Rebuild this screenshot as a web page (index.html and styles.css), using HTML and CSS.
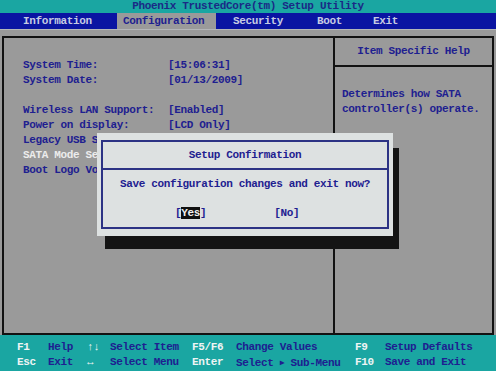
FILE: index.html
```html
<!DOCTYPE html>
<html lang="en">
<head>
    <meta charset="UTF-8">
    <meta name="viewport" content="width=device-width, initial-scale=1.0">
    <title>Phoenix TrustedCore(tm) Setup Utility</title>
    <link rel="stylesheet" href="styles.css">
</head>
<body>
    <div class="title">Phoenix TrustedCore(tm) Setup Utility</div>

    <div class="menu">
        <span class="tab tab-info">Information</span>
        <span class="tab tab-config active">Configuration</span>
        <span class="tab tab-security">Security</span>
        <span class="tab tab-boot">Boot</span>
        <span class="tab">Exit</span>
    </div>

    <div class="frame">
        <div class="settings">
            <span class="label">System Time:</span><span class="value">[15:06:31]</span>
            <span class="label">System Date:</span><span class="value">[01/13/2009]</span>
            <span class="blank"></span><span class="blank"></span>
            <span class="label">Wireless LAN Support:</span><span class="value">[Enabled]</span>
            <span class="label">Power on display:</span><span class="value">[LCD Only]</span>
            <!-- the rest of these rows is hidden under the popup -->
            <span class="label">Legacy USB S</span><span class="blank"></span>
            <span class="label selected">SATA Mode Se</span><span class="blank"></span>
            <span class="label">Boot Logo Vo</span><span class="blank"></span>
        </div>
        <div class="help">
            <div class="help-head">Item Specific Help</div>
            <div class="help-text">
                Determines how SATA<br>
                controller(s) operate.
            </div>
        </div>
    </div>

    <div class="footer">
        <span class="key">F1</span><span>Help</span>
        <span class="key">&#8593;&#8595;</span><span>Select Item</span>
        <span class="key">F5/F6</span><span>Change Values</span>
        <span class="key">F9</span><span>Setup Defaults</span>

        <span class="key">Esc</span><span>Exit</span>
        <span class="key">&#8596;</span><span>Select Menu</span>
        <span class="key">Enter</span><span>Select <span class="arrow">&#9654;</span> Sub-Menu</span>
        <span class="key">F10</span><span>Save and Exit</span>
    </div>

    <!-- confirmation popup sits over the settings -->
    <div class="dialog">
        <div class="dialog-inner">
            <div class="dialog-title">Setup Confirmation</div>
            <div class="dialog-msg">Save configuration changes and exit now?</div>
            <div class="dialog-buttons">
                <span>[<span class="pick">Yes</span>]</span>
                <span>[No]</span>
            </div>
        </div>
    </div>
</body>
</html>
```

FILE: styles.css
```css
body {
    margin: 0;
    width: 496px;
    height: 371px;
    overflow: hidden;
    position: relative;
    background-color: #9a9a9a;
    font-family: "Liberation Mono", "DejaVu Sans Mono", monospace;
    font-size: 11px;
    font-weight: bold;
    letter-spacing: -0.35px;
    color: #1e2090;
}

.title {
    height: 13px;
    line-height: 13px;
    background-color: #1aa6a2;
    text-align: center;
    color: #1a2a86;
}

.menu {
    display: flex;
    height: 16px;
    line-height: 16px;
    padding-left: 17px;
    background-color: #0a14a2;
    color: #c6cbe2;
    border-bottom: 1px solid #b4b6b8;
}

.tab {
    padding-left: 6px;
    box-sizing: border-box;
}

.tab-info {
    width: 100px;
}

.tab-config {
    width: 99px;
    margin-right: 11px;
}

.tab-security {
    width: 84px;
}

.tab-boot {
    width: 56px;
}

.tab.active {
    background-color: #9a9a9a;
    color: #1e2090;
}

.frame {
    display: grid;
    grid-template-columns: 329px 1fr;
    height: 295px;
    margin: 6px 2px 0 2px;
    border: 2px solid #121212;
}

.settings {
    display: grid;
    grid-template-columns: 145px auto;
    grid-auto-rows: 15px;
    align-content: start;
    line-height: 15px;
    padding: 20px 0 0 19px;
    white-space: nowrap;
}

.selected {
    color: #ececec;
}

.help {
    border-left: 2px solid #121212;
}

.help-head {
    height: 27px;
    line-height: 27px;
    text-align: center;
    border-bottom: 2px solid #121212;
}

.help-text {
    padding: 20px 0 0 7px;
    line-height: 15px;
}

.footer {
    display: grid;
    grid-template-columns: 31px 39px 23px 82px 44px 119px 30px 1fr;
    grid-auto-rows: 15px;
    line-height: 15px;
    height: 36px;
    box-sizing: border-box;
    padding: 5px 0 0 17px;
    background-color: #1aa6a2;
    color: #1e2090;
    white-space: nowrap;
}

.key {
    color: #eef4f4;
}

.arrow {
    font-size: 8px;
    vertical-align: 1px;
}

.dialog {
    position: absolute;
    left: 97px;
    top: 133px;
    width: 296px;
    height: 103px;
    box-sizing: border-box;
    padding: 7px 4px;
    background-color: #dde1e1;
    box-shadow: 7px 14px 0 -1px #141414;
}

.dialog-inner {
    height: 100%;
    box-sizing: border-box;
    border: 2px solid #2c3284;
}

.dialog-title {
    height: 26px;
    line-height: 26px;
    text-align: center;
    border-bottom: 2px solid #2c3284;
}

.dialog-msg {
    margin-top: 7px;
    line-height: 15px;
    text-align: center;
}

.dialog-buttons {
    display: flex;
    gap: 68px;
    margin-top: 14px;
    padding-left: 72px;
    line-height: 15px;
}

.pick {
    background-color: #101010;
    color: #f2f2f2;
}
```
